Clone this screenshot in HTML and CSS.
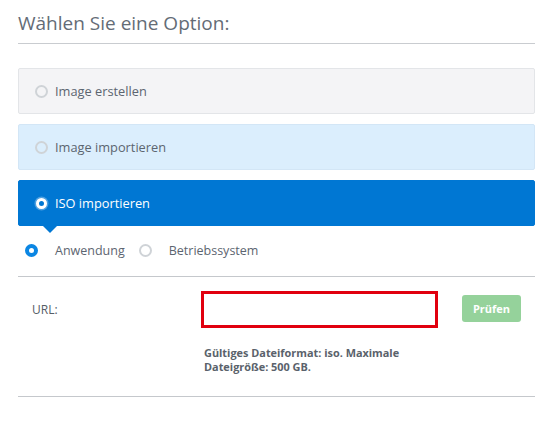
FILE: index.html
```html
<!DOCTYPE html>
<html lang="de">
<head>
<meta charset="utf-8">
<title>Option</title>
<link rel="stylesheet" href="styles.css">
</head>
<body>
<div class="page">
  <h1 class="title">Wählen Sie eine Option:</h1>
  <div class="options">
    <div class="opt opt-default"><span class="radio"></span><span class="opt-label">Image erstellen</span></div>
    <div class="opt opt-hover"><span class="radio"></span><span class="opt-label">Image importieren</span></div>
    <div class="opt opt-active"><span class="radio radio-on-dark"></span><span class="opt-label">ISO importieren</span><span class="pointer"></span></div>
  </div>
  <div class="subrow">
    <span class="radio radio-checked"></span><span class="sub-label">Anwendung</span>
    <span class="radio radio-plain"></span><span class="sub-label">Betriebssystem</span>
  </div>
  <div class="url-section">
    <div class="url-row">
      <label class="url-label">URL:</label>
      <div class="url-input"></div>
      <button class="btn-check">Prüfen</button>
    </div>
    <p class="help">Gültiges Dateiformat: iso. Maximale<br>Dateigröße: 500 GB.</p>
  </div>
</div>
</body>
</html>
```
FILE: styles.css
```css
* { box-sizing: border-box; }
html, body { margin: 0; padding: 0; background: #fff; }
body { font-family: "Open Sans", "Liberation Sans", sans-serif; color: #5c6570; }
.page { width: 517px; margin-left: 18px; padding-top: 10px; }
.title {
  margin: 0;
  font-size: 19px;
  font-weight: 400;
  line-height: 27px;
  color: #646c76;
  padding-bottom: 6px;
  border-bottom: 1px solid #c9ccd0;
}
.options { margin-top: 24px; display: flex; flex-direction: column; gap: 10px; }
.opt {
  position: relative;
  height: 46px;
  border: 1px solid #e3e5e8;
  border-radius: 2px;
  display: flex;
  align-items: center;
  padding-left: 16px;
  font-size: 12.8px;
}
.opt-default { background: #f4f4f6; }
.opt-hover { background: #dbeefd; border-color: #d3e6f6; }
.opt-active { background: #0077d3; border-color: #0077d3; color: #fff; }
.opt-label { margin-left: 7px; }
.radio {
  display: inline-block;
  width: 13px;
  height: 13px;
  border-radius: 50%;
  border: 2px solid #cfd3d7;
  background: #fff;
  flex: none;
}
.opt-default .radio, .opt-hover .radio { background: transparent; }
.radio-on-dark {
  width: 11px; height: 11px;
  margin-left: 1px;
  margin-right: 1px;
  border: 3.5px solid #fff;
  background: #0077d3;
  box-shadow: 0 0 0 1.5px rgba(255,255,255,0.3);
}
.pointer {
  position: absolute;
  left: 23px;
  bottom: -8px;
  width: 0; height: 0;
  border-left: 8px solid transparent;
  border-right: 8px solid transparent;
  border-top: 8px solid #0077d3;
}
.subrow {
  display: flex;
  align-items: center;
  height: 50px;
  padding: 14px 0 16px 7px;
  font-size: 12.5px;
}
.subrow .radio-checked { border: 4px solid #0b86e3; background: #fff; width: 13px; height: 13px; }
.subrow .radio-plain { margin-left: 14px; }
.sub-label { margin-left: 17px; color: #5c6570; }
.url-section {
  border-top: 1px solid #c5c8cc;
  border-bottom: 1px solid #c5c8cc;
  padding: 14px 0 22px 14px;
}
.url-row { display: flex; align-items: center; }
.url-label { width: 169px; font-size: 12px; color: #555d66; }
.url-input {
  width: 237px;
  height: 37px;
  border: 3px solid #e1000f;
  background: #fff;
}
.btn-check {
  margin-left: 24px;
  width: 59px;
  height: 27px;
  border: none;
  border-radius: 3px;
  background: #95d29b;
  color: #fff;
  font-family: "Open Sans", "Liberation Sans", sans-serif;
  font-size: 11px;
  font-weight: 700;
  padding: 0;
  margin-top: -3px;
}
.help {
  margin: 18px 0 0 172px;
  font-size: 10.9px;
  line-height: 14px;
  font-weight: 700;
  color: #5a626b;
}
```
